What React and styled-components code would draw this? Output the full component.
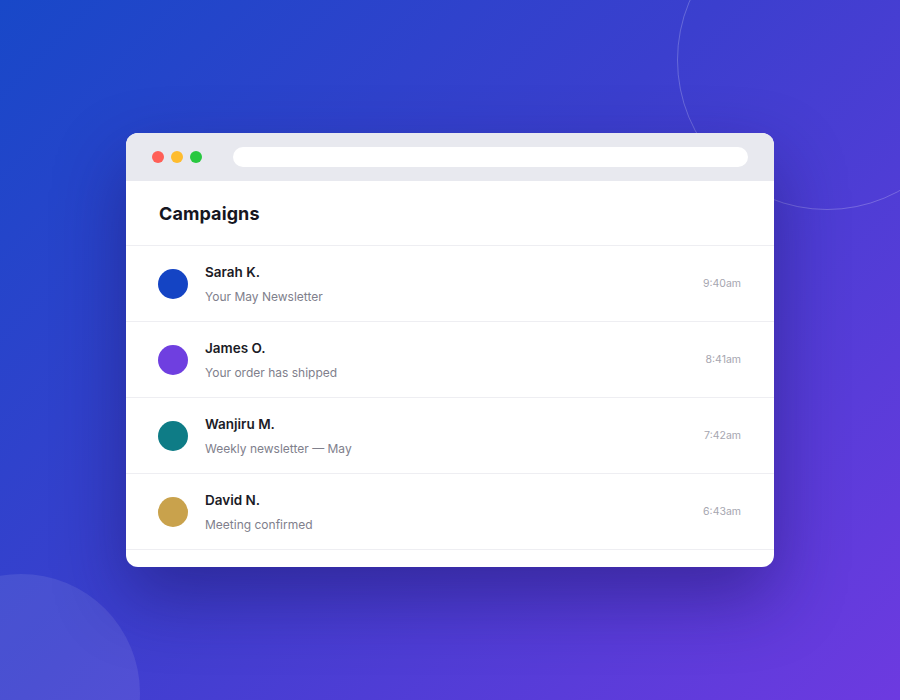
import React from "react";
import styled, { createGlobalStyle } from "styled-components";

const GlobalStyle = createGlobalStyle`
  html, body {
    margin: 0;
    padding: 0;
  }
  body {
    font-family: "Inter", "Noto Sans", sans-serif;
  }
`;

const Page = styled.div`
  position: relative;
  width: 900px;
  height: 700px;
  overflow: hidden;
  display: flex;
  align-items: center;
  justify-content: center;
  background: linear-gradient(135deg, #1848c8 0%, #3b3fce 45%, #6d3ae0 100%);
`;

const Ring = styled.div`
  position: absolute;
  left: 677px;
  top: -90px;
  width: 300px;
  height: 300px;
  border-radius: 50%;
  border: 1px solid rgba(255, 255, 255, 0.22);
  box-sizing: border-box;
`;

const Blob = styled.div`
  position: absolute;
  left: -98px;
  top: 574px;
  width: 238px;
  height: 238px;
  border-radius: 50%;
  background: rgba(255, 255, 255, 0.09);
`;

const Window = styled.div`
  position: relative;
  width: 648px;
  background: #fff;
  border-radius: 12px;
  overflow: hidden;
  box-shadow: 0 30px 70px rgba(25, 15, 90, 0.45);
  padding-bottom: 17px;
`;

const TitleBar = styled.div`
  height: 48px;
  background: #e8e9ef;
  display: flex;
  align-items: center;
  padding: 0 26px;
`;

const Dots = styled.div`
  display: flex;
  gap: 7px;
  margin-right: 31px;
`;

const Dot = styled.span`
  width: 12px;
  height: 12px;
  border-radius: 50%;
  background: ${(p) => p.color};
`;

const UrlBar = styled.div`
  flex: 1;
  height: 20px;
  border-radius: 10px;
  background: #fff;
`;

const Header = styled.div`
  height: 65px;
  display: flex;
  align-items: center;
  padding: 0 33px;
  border-bottom: 1px solid #eeeef2;
  box-sizing: border-box;
`;

const Title = styled.h2`
  margin: 0;
  font-size: 18px;
  font-weight: 700;
  color: #16161f;
  letter-spacing: 0.1px;
`;

const Row = styled.div`
  height: 76px;
  box-sizing: border-box;
  display: flex;
  align-items: center;
  padding: 0 33px 0 32px;
  border-bottom: 1px solid #eeeef2;
`;

const Avatar = styled.div`
  width: 30px;
  height: 30px;
  border-radius: 50%;
  background: ${(p) => p.color};
  flex-shrink: 0;
  margin-right: 17px;
`;

const Info = styled.div`
  flex: 1;
  display: flex;
  flex-direction: column;
  gap: 9px;
`;

const Name = styled.div`
  font-size: 13.5px;
  font-weight: 600;
  color: #1b1b26;
`;

const Subject = styled.div`
  font-size: 12px;
  color: #80808c;
`;

const Time = styled.div`
  font-size: 10.5px;
  color: #a6a6b0;
`;

const messages = [
  { name: "Sarah K.", subject: "Your May Newsletter", time: "9:40am", color: "#1444c4" },
  { name: "James O.", subject: "Your order has shipped", time: "8:41am", color: "#6f3fe0" },
  { name: "Wanjiru M.", subject: "Weekly newsletter — May", time: "7:42am", color: "#0e7c86" },
  { name: "David N.", subject: "Meeting confirmed", time: "6:43am", color: "#c9a24c" },
];

const App = () => {
  return (
    <>
      <GlobalStyle />
      <Page>
        <Ring />
        <Blob />
        <Window>
          <TitleBar>
            <Dots>
              <Dot color="#ff5f57" />
              <Dot color="#febc2e" />
              <Dot color="#28c840" />
            </Dots>
            <UrlBar />
          </TitleBar>
          <Header>
            <Title>Campaigns</Title>
          </Header>
          {messages.map((m) => (
            <Row key={m.name}>
              <Avatar color={m.color} />
              <Info>
                <Name>{m.name}</Name>
                <Subject>{m.subject}</Subject>
              </Info>
              <Time>{m.time}</Time>
            </Row>
          ))}
        </Window>
      </Page>
    </>
  );
};

export default App;
